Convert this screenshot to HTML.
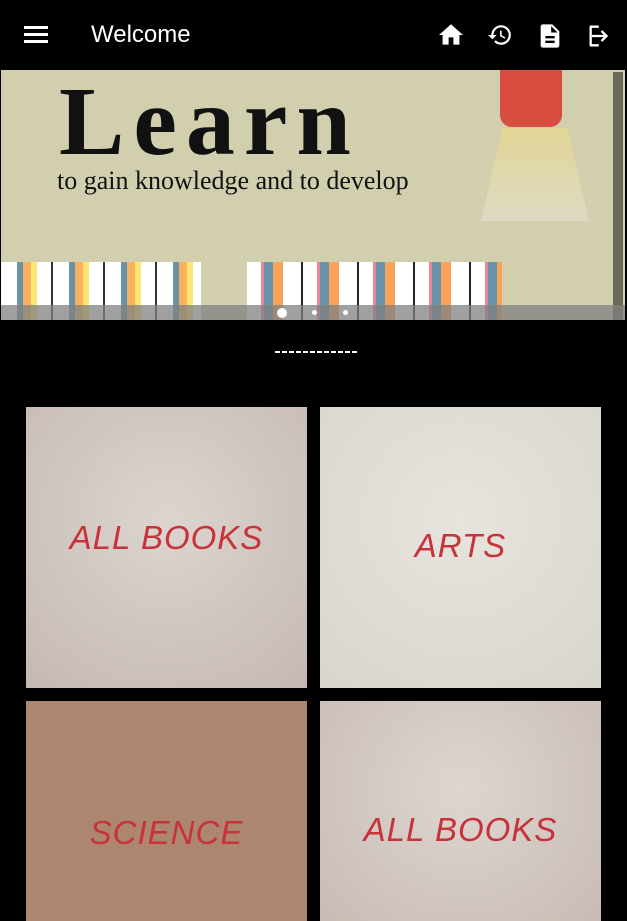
<!DOCTYPE html>
<html><head><meta charset="utf-8"><style>
*{margin:0;padding:0;box-sizing:border-box}
body{width:627px;height:910px;background:#000;overflow:hidden;font-family:"Liberation Sans",sans-serif;position:relative}
.top{position:absolute;left:0;top:0;width:627px;height:70px;background:#000;color:#fff}
.title{position:absolute;left:91px;top:21px;font-size:24px}
.banner{position:absolute;left:1px;top:70px;width:624px;height:250px;background:#d2cfae;overflow:hidden}
.learn{position:absolute;left:58px;top:4px;font-family:"Liberation Serif",serif;font-size:98px;line-height:96px;color:#111;letter-spacing:9px;font-weight:bold}
.sub{position:absolute;left:56px;top:96px;font-family:"Liberation Serif",serif;font-size:26px;color:#111;letter-spacing:0px}
.card{position:absolute;display:flex;justify-content:center;color:#c8323a;font-family:"Liberation Sans",sans-serif;font-size:33px;letter-spacing:1px;font-style:italic}
</style></head><body>
<div class="top">
<svg style="position:absolute;left:24px;top:25px" width="24" height="18"><rect y="1" width="24" height="3" fill="#fff"/><rect y="8" width="24" height="3" fill="#fff"/><rect y="15" width="24" height="3" fill="#fff"/></svg>
<div class="title">Welcome</div>
<svg style="position:absolute;left:438px;top:23px" width="26" height="24" viewBox="2 2 20 20"><path d="M10 20v-6h4v6h5v-8h3L12 3 2 12h3v8z" fill="#fff"/></svg>
<svg style="position:absolute;left:486px;top:22px" width="28" height="26" viewBox="0 0 24 24"><path d="M13 3a9 9 0 0 0-9 9H1l3.9 3.9L9 12H6a7 7 0 1 1 2 4.9l-1.4 1.4A9 9 0 1 0 13 3zm-1 5v5l4.3 2.5.7-1.2-3.5-2.1V8z" fill="#fff"/></svg>
<svg style="position:absolute;left:536px;top:22px" width="28" height="28" viewBox="0 0 24 24"><path d="M14 2H6a2 2 0 0 0-2 2v16a2 2 0 0 0 2 2h12a2 2 0 0 0 2-2V8zm2 16H8v-2h8zm0-4H8v-2h8zm-3-5V3.5L18.5 9z" fill="#fff"/></svg>
<svg style="position:absolute;left:586px;top:22px" width="28" height="28" viewBox="0 0 24 24"><path d="M10 17l1.4-1.4L8.8 13H19v-2H8.8l2.6-2.6L10 7l-5 5z" fill="#fff" transform="translate(24,0) scale(-1,1)"/><path d="M4 3h7v2H5v14h6v2H4a1 1 0 0 1-1-1V4a1 1 0 0 1 1-1z" fill="#fff"/></svg>
</div>
<div class="banner">
<div class="learn">Learn</div>
<div class="sub">to gain knowledge and to develop</div>
<div style="position:absolute;left:499px;top:0;width:62px;height:57px;background:#d94c40;border-radius:0 0 12px 12px"></div>
<div style="position:absolute;left:480px;top:58px;width:108px;height:93px;background:linear-gradient(#e6d790,#e0ddc8);clip-path:polygon(20% 0,80% 0,100% 100%,0 100%);opacity:.8"></div>
<div style="position:absolute;left:612px;top:2px;width:10px;height:248px;background:#6b6a58"></div>
<div style="position:absolute;left:0;top:192px;width:200px;height:58px;background:repeating-linear-gradient(90deg,#fff 0 16px,#6993aa 16px 22px,#f8b25b 22px 30px,#fde575 30px 36px,#fff 36px 50px,#333 50px 52px)"></div>
<div style="position:absolute;left:246px;top:192px;width:255px;height:58px;background:repeating-linear-gradient(90deg,#fff 0 14px,#e7889a 14px 17px,#6993aa 17px 26px,#f8a25b 26px 36px,#fff 36px 54px,#222 54px 56px)"></div>
<div style="position:absolute;left:0;top:235px;width:624px;height:15px;background:rgba(128,128,128,.75)"></div>
<div style="position:absolute;left:276px;top:238px;width:10px;height:10px;border-radius:50%;background:#fff"></div>
<div style="position:absolute;left:311px;top:240px;width:5px;height:5px;border-radius:50%;background:#fff"></div>
<div style="position:absolute;left:342px;top:240px;width:5px;height:5px;border-radius:50%;background:#fff"></div>
</div>
<div style="position:absolute;left:275px;top:351px;width:82px;height:2px;background:repeating-linear-gradient(90deg,#fff 0 5px,transparent 5px 7px)"></div>
<div class="card" style="left:26px;top:407px;width:281px;height:281px;background:radial-gradient(circle at 50% 40%,#dcd5cf,#c5b8b2);padding-top:112px">ALL BOOKS</div>
<div class="card" style="left:320px;top:407px;width:281px;height:281px;background:radial-gradient(circle at 50% 40%,#e7e4dd,#d8d5ce);padding-top:120px">ARTS</div>
<div class="card" style="left:26px;top:701px;width:281px;height:220px;background:#ad8671;padding-top:113px">SCIENCE</div>
<div class="card" style="left:320px;top:701px;width:281px;height:220px;background:radial-gradient(circle at 50% 40%,#ddd6d0,#c8bbb4);padding-top:110px">ALL BOOKS</div>
</body></html>
